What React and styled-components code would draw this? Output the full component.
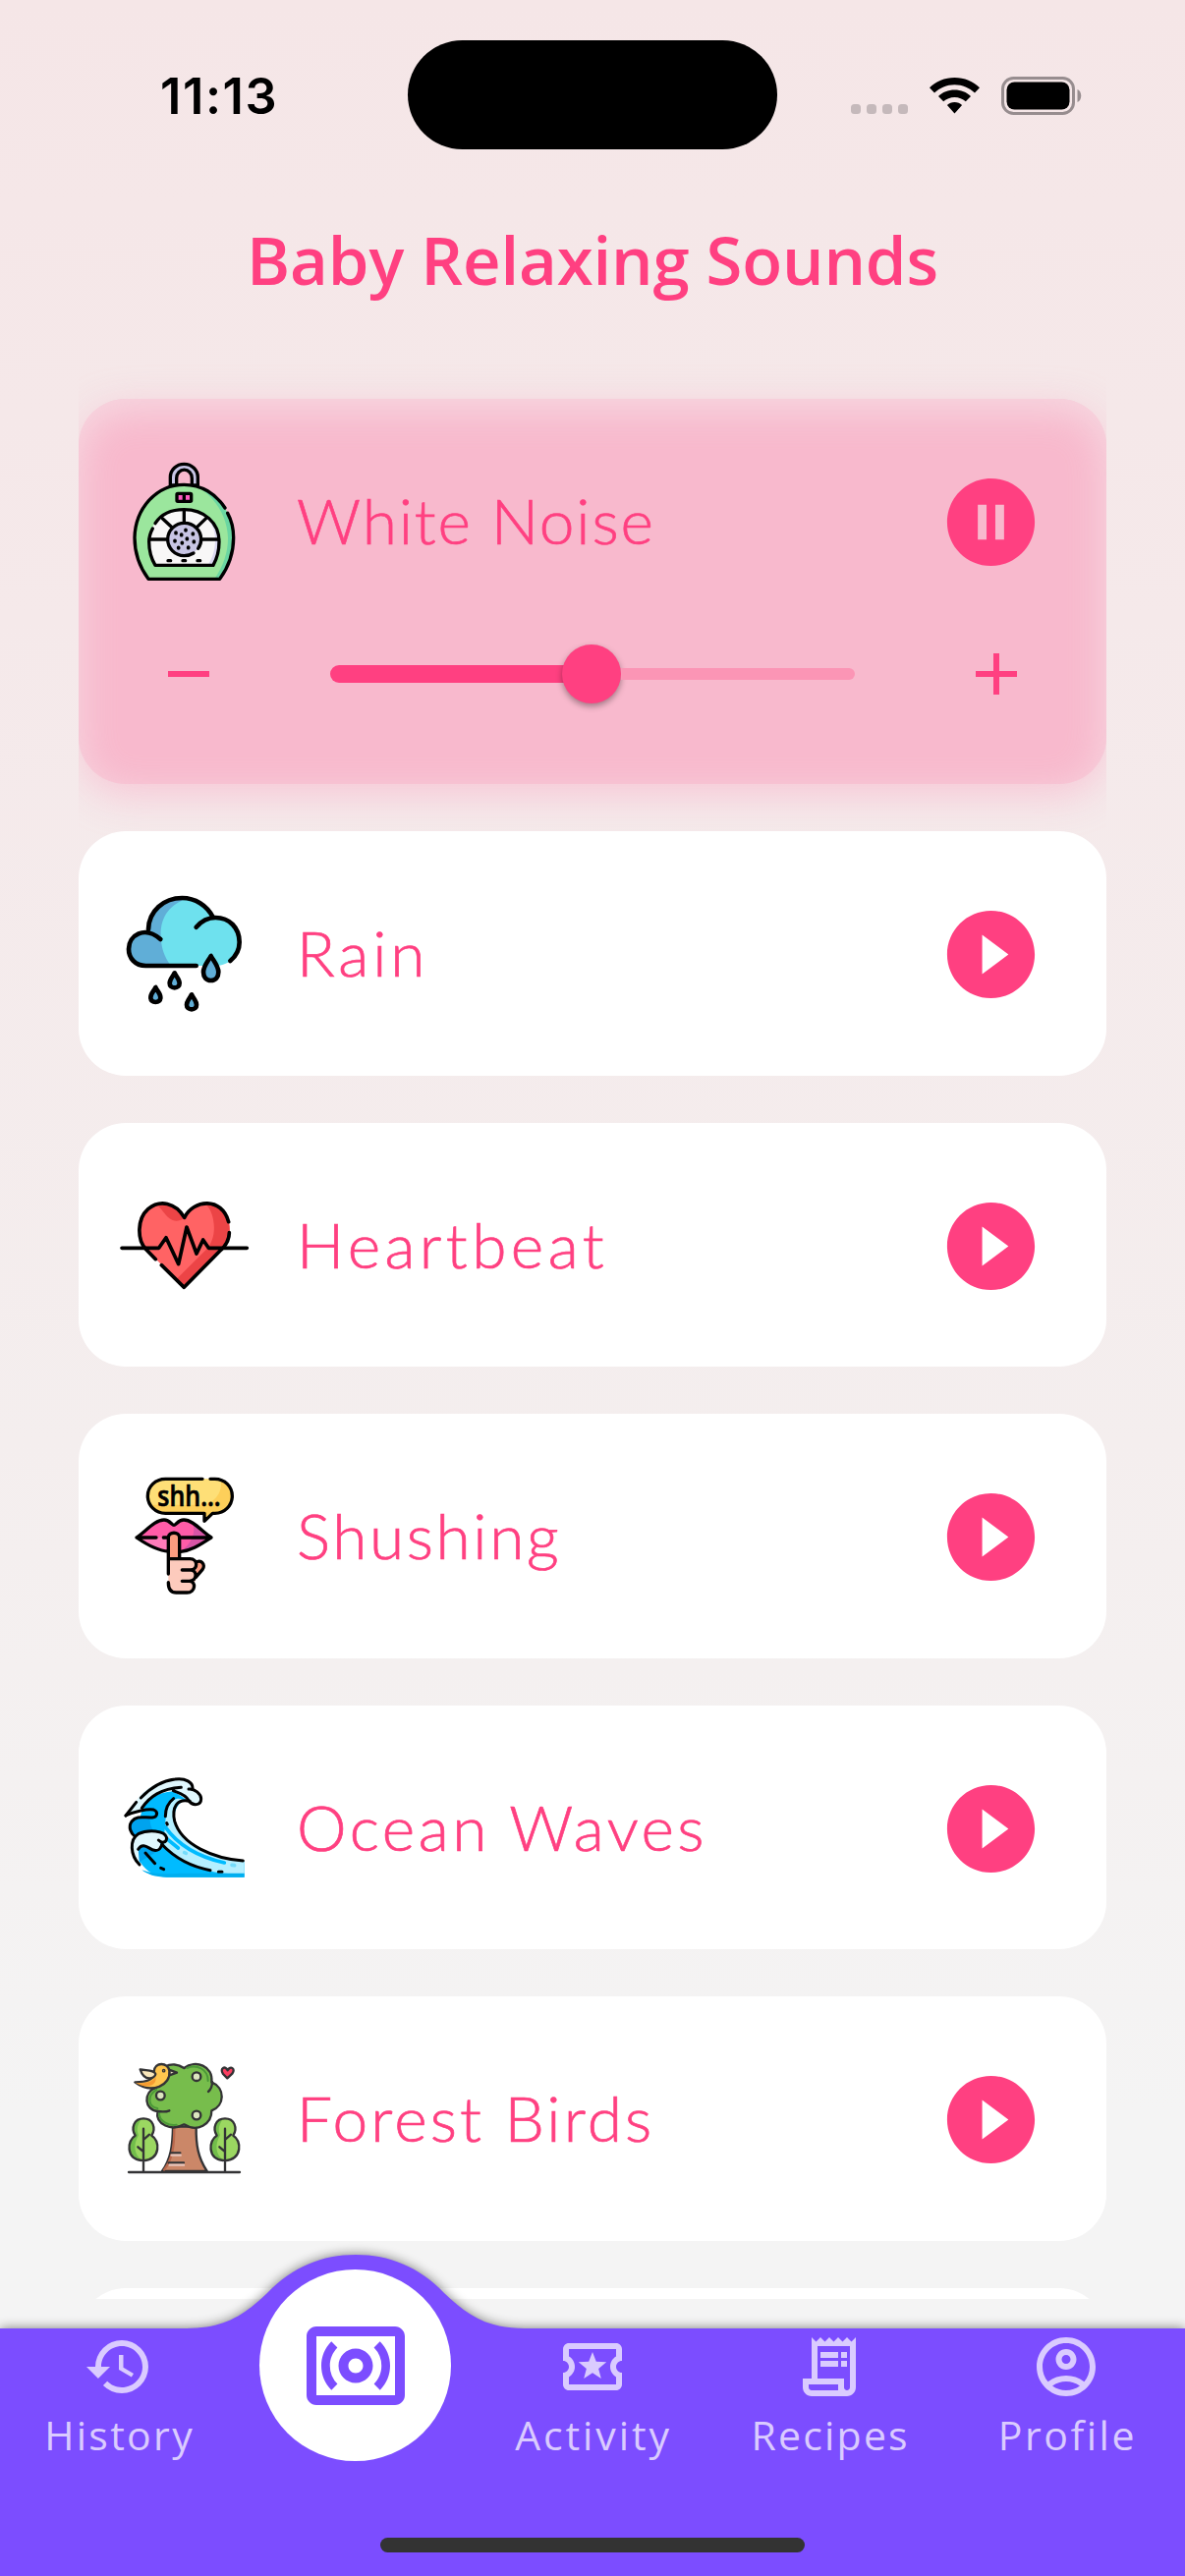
import React from "react";
import styled, { createGlobalStyle } from "styled-components";
import {
  MdAdd,
  MdHistory,
  MdOutlineAccountCircle,
  MdOutlineLocalActivity,
  MdOutlineReceiptLong,
  MdOutlineSurroundSound,
  MdPauseCircleFilled,
  MdPlayCircleFilled,
  MdRemove,
} from "react-icons/md";

const pink = "#ff4081";
const purple = "#7c4dff";

const GlobalStyle = createGlobalStyle`
  * { box-sizing: border-box; }
  body { margin: 0; background: #f4f4f4; }
  svg { display: block; flex-shrink: 0; }
`;

const Screen = styled.div`
  width: 1206px;
  height: 2622px;
  overflow: hidden;
  display: flex;
  flex-direction: column;
  background: linear-gradient(180deg, #f5e6e7 0%, #f5e9ea 24%, #f4eeee 56%, #f4f4f4 82%);
  font-family: "Open Sans", "Noto Sans", sans-serif;
`;

const StatusBar = styled.header`
  height: 193px;
  padding: 41px 105px 0 163px;
  display: flex;
  align-items: flex-start;
`;

const Clock = styled.time`
  width: 252px;
  height: 112px;
  line-height: 114px;
  font-family: Inter, "Liberation Sans", sans-serif;
  font-size: 50.5px;
  font-weight: 600;
  letter-spacing: 1.6px;
  color: #000;
`;

const Island = styled.div`
  width: 376px;
  height: 111px;
  border-radius: 56px;
  background: #000;
`;

const StatusIcons = styled.div`
  flex: 1;
  height: 112px;
  display: flex;
  align-items: center;
  justify-content: flex-end;
  gap: 22px;
`;

const SignalDots = styled.div`
  display: flex;
  gap: 6px;
  padding-top: 28px;
`;

const Dot = styled.i`
  width: 10px;
  height: 10px;
  border-radius: 3.5px;
  background: #c5b9bb;
`;

const Title = styled.h1`
  margin: 0;
  height: 173px;
  line-height: 142px;
  text-align: center;
  font-size: 67px;
  font-weight: 600;
  letter-spacing: -0.15px;
  color: ${pink};
`;

const List = styled.main`
  height: 1974px;
  margin: 0 80px;
  padding-top: 40px;
  overflow: hidden;
  display: flex;
  flex-direction: column;
  gap: 48px;
`;

const Card = styled.section`
  flex: none;
  height: ${(p) => (p.$active ? 392 : 248.5)}px;
  border-radius: 48px;
  background: ${(p) => (p.$active ? "#f8b9cd" : "#fff")};
  box-shadow: ${(p) =>
    p.$active
      ? "inset 0 11px 42px rgba(245,228,232,.75), 0 11px 42px rgba(248,185,205,.72)"
      : "none"};
`;

const CardHead = styled.div`
  height: 248.5px;
  padding: 0 64px 0 30px;
  display: flex;
  align-items: center;
`;

const Label = styled.h2`
  flex: 1;
  margin: 0 0 0 32px;
  font-family: Lato, "Open Sans", sans-serif;
  font-size: 64px;
  line-height: 90px;
  font-weight: 300;
  letter-spacing: ${(p) => p.$track}px;
  -webkit-text-stroke: 0.7px ${pink};
  color: ${pink};
`;

const PlayButton = styled.button`
  width: 108px;
  height: 110px;
  padding: 3px 0 0 0.5px;
  border: 0;
  background: none;
  color: ${pink};
  font-size: 107px;
`;

const VolumeRow = styled.div`
  height: 63px;
  padding: 0 76px;
  display: flex;
  align-items: center;
  justify-content: space-between;
  color: ${pink};
  font-size: 72px;
`;

const Slider = styled.div`
  width: 534px;
  height: 60px;
  margin-left: 25px;
  margin-right: 25px;
  display: flex;
  align-items: center;
`;

const Played = styled.div`
  flex: 1;
  height: 18px;
  margin-right: -2px;
  border-radius: 9px 0 0 9px;
  background: ${pink};
`;

const Remaining = styled.div`
  flex: 1;
  height: 12px;
  border-radius: 0 6px 6px 0;
  background: #fb95b5;
`;

const Thumb = styled.div`
  width: 60px;
  height: 60px;
  border-radius: 50%;
  background: ${pink};
  box-shadow: 0 3px 6px rgba(0, 0, 0, 0.35);
`;

const Nav = styled.nav`
  position: relative;
  height: 282px;
  padding-top: 30px;
`;

const NavShape = styled.svg`
  position: absolute;
  left: 0;
  bottom: 0;
`;

const Tabs = styled.div`
  position: relative;
  display: grid;
  grid-template-columns: repeat(5, 1fr);
  height: 213px;
`;

const Tab = styled.a`
  display: flex;
  flex-direction: column;
  align-items: center;
  padding-top: 3px;
  color: #dacbff;
  font-size: 72px;
`;

const TabLabel = styled.span`
  margin-top: 5px;
  padding-left: 2px;
  font-size: 41px;
  line-height: 56px;
  font-weight: 400;
  letter-spacing: ${(p) => p.$track}px;
`;

const ActiveTab = styled.a`
  width: 195px;
  height: 195px;
  margin-top: -60px;
  justify-self: center;
  display: grid;
  place-items: center;
  border-radius: 50%;
  background: #fff;
  color: ${purple};
  font-size: 120px;
`;

const HomeIndicator = styled.div`
  position: relative;
  width: 432px;
  height: 15px;
  margin: 0 auto;
  border-radius: 8px;
  background: #333;
`;

const Picture = styled.svg.attrs({ width: 160, height: 160 })`
  overflow: visible;
  fill: none;
  stroke: ${(p) => p.$ink || "#000"};
  stroke-width: ${(p) => p.$weight || 10};
  stroke-linecap: round;
  stroke-linejoin: round;
`;

const NoisePicture = () => (
  <Picture viewBox="0 30 480 480">
    <path d="M190 162V137a42 40 0 0 1 84 0v25h-18v-22a23 25 0 0 0-47 0v22Z" fill="#c8c6e6" />
    <path d="M123 448C95 410 81 368 81 322C83 235 145 160 232 160S381 235 383 322C383 368 369 410 341 448Z" fill="#9be69d" stroke="none" />
    <path d="M285 174C345 198 381 255 383 322C383 368 369 410 341 448H325C352 408 366 368 366 322C364 262 333 208 285 174Z" fill="#6bd6a2" stroke="none" />
    <path d="M357 231C329 188 285 160 232 160C145 160 83 235 81 322C81 368 95 410 123 448H341C369 410 383 368 383 322C383 294 377 269 365 247" />
    <path d="M144 406C131 385 125 360 125 334C125 275 172 236 232 236S339 275 339 334C339 360 333 385 321 406Z" fill="#f8f7f7" stroke="none" />
    <path d="M292 254C323 270 339 299 339 334C339 360 333 385 321 406H305C321 380 327 355 327 327C327 298 316 274 292 254Z" fill="#dbd8f0" stroke="none" />
    <path d="M136 294C127 311 125 322 125 334C125 360 131 385 144 406H321C333 385 339 360 339 334C339 275 292 236 232 236C195 236 162 250 144 278" />
    <path d="M232 238v38M166 263l29 27M299 263l-28 27M127 327h54M338 327h-54" />
    <circle cx="232" cy="327" r="50" fill="#c8c5e4" stroke="none" />
    <path d="M275 355C283 344 284 334 284 327a51 50 0 1 0-52 50c12 0 21-3 29-8" />
    <rect x="210" y="187" width="44" height="24" rx="3" fill="#ff5bc3" />
    <path d="M232 188v22M183 392h8M228 392h8M273 392h8" />
    <path d="M207 306v2M237 298v2M259 309v2M224 312v2M241 324v2M204 331v2M226 337v2M262 333v2M215 352v2M245 351v2" strokeWidth="11" />
  </Picture>
);

const RainPicture = () => (
  <Picture viewBox="0 0 480 480" $weight={14}>
    <path d="M115 279C82 279 63 255 63 228C63 197 86 175 123 175C124 112 170 72 226 72C266 72 301 94 320 130C370 130 401 163 401 207C401 241 378 279 325 279Z" fill="#6ee1ee" stroke="none" />
    <path d="M115 279C82 279 63 255 63 228C63 197 86 175 123 175C124 112 170 72 235 76C180 98 161 137 161 184C161 222 171 252 192 279Z" fill="#60aed7" stroke="none" />
    <path d="M269 279H115C82 279 63 255 63 228C63 186 111 155 160 198" />
    <path d="M123 168C124 112 170 72 226 72C266 72 301 94 320 130M269 161C290 137 308 132 328 132C370 132 401 163 401 207C401 228 390 250 373 264" />
    <path d="M314 249C306 264 291 280 291 298C291 314 300 324 314 324S337 314 337 298C337 280 322 264 314 249Z" fill="#60aed7" />
    {[
      [203, 301],
      [145, 345],
      [255, 367],
    ].map(([x, y]) => (
      <path key={x} d={`M${x} ${y}c-5 11-15 19-15 31 0 9 6 14 15 14s15-5 15-14c0-12-10-20-15-31Z`} fill="#60aed7" />
    ))}
  </Picture>
);

const HeartPicture = () => (
  <Picture viewBox="0 -10 480 480" $weight={11}>
    <path d="M232 360L126 254C84 215 84 154 112 125C151 86 205 99 233 149C257 98 315 89 350 124C380 154 380 213 340 250Z" fill="#ff6364" stroke="none" />
    <path d="M292 104C330 101 372 134 371 185C370 218 355 237 340 250L232 360L208 336L300 244C327 216 330 166 313 127C308 115 300 108 292 104ZM148 108C170 98 210 110 233 149C214 161 199 158 188 150C172 138 164 119 148 108Z" fill="#ec4446" stroke="none" />
    <path d="M145 274L116 244C88 216 88 151 122 121C158 91 206 101 233 147C261 91 347 83 368 160M370 193C370 218 356 236 340 250L232 360L163 292" />
    <path d="M42 240H155L177 208L215 289L240 176L270 257L290 215L307 240H424" />
  </Picture>
);

const BubbleText = styled.text`
  fill: #000;
  stroke: #000;
  stroke-width: 2;
  font-family: "Open Sans", sans-serif;
  font-size: 88px;
  font-weight: 600;
`;

const ShushPicture = () => (
  <Picture viewBox="0 10 480 480">
    <path d="M175 77H326C356 77 379 100 379 129S356 182 326 182H319L294 206V182H175C145 182 121 158 121 129S145 77 175 77Z" fill="#fedf77" stroke="none" />
    <path d="M344 79C367 86 379 105 379 129C379 158 356 182 326 182H319L294 206V182H175C155 182 138 171 129 156H295C327 147 351 115 344 79Z" fill="#fdcf5a" stroke="none" />
    <path d="M288 77H175C145 77 121 100 121 129S145 182 175 182H294V206L319 182H326C356 182 379 158 379 129S356 77 326 77H312" />
    <BubbleText x="151" y="159" textLength="193" lengthAdjust="spacingAndGlyphs">shh...</BubbleText>
    <path d="M87 256C116 236 143 202 171 202C188 202 195 218 201 218S214 202 231 202C259 202 285 236 315 256C283 276 252 301 201 298C150 301 116 276 87 256Z" fill="#ff5ca8" stroke="none" />
    <path d="M87 256H201V299C150 301 116 276 87 256Z" fill="#ff7bba" stroke="none" />
    <path d="M259 213C279 225 294 243 315 256C290 274 257 296 222 298C248 281 270 245 259 213Z" fill="#d755a6" stroke="none" />
    <path d="M87 256C116 236 143 202 171 202C188 202 195 218 201 218S214 202 231 202C259 202 285 236 315 256C283 276 256 296 222 299M87 256C116 276 149 297 184 298M87 256H147M169 256H184M218 256H315" />
    <path d="M184 390V256C184 237 218 237 218 256V321H250C262 321 269 329 268 337C275 322 292 333 292 347L268 380C270 389 262 392 262 398C266 423 248 424 241 424H205C190 424 184 412 184 400Z" fill="#fdcbbd" stroke="none" />
    <path d="M184 321V256C184 237 218 237 218 256V321ZM269 334C281 323 292 333 292 347L269 373Z" fill="#fb9c80" stroke="none" />
    <path d="M184 367V256C184 237 218 237 218 256V321M184 321H250C275 321 275 354 252 355H226M252 355C273 355 273 389 248 389H226M248 389C270 389 267 424 241 424H208C193 424 184 413 184 393M268 333C282 320 300 339 288 354L268 377" />
  </Picture>
);

const WavePicture = () => (
  <Picture viewBox="0 0 480 480" $weight={9}>
    <path d="M105 183C127 150 152 134 197 130L253 160C219 147 197 190 204 224C219 291 335 337 416 342V392H180C144 392 117 374 100 349C80 336 68 301 83 270C60 253 62 206 98 208Z" fill="#00bbff" stroke="none" />
    <path d="M128 204C126 237 136 256 160 266L181 295L98 344C68 304 68 285 83 270C53 240 68 203 105 208Z" fill="#00a3ee" stroke="none" />
    <path d="M240 162C206 155 198 192 206 226C226 293 334 341 416 342V382C282 386 190 337 169 287L164 256C180 273 168 216 184 177C199 148 220 146 240 162Z" fill="#b5efff" stroke="none" />
    <path d="M174 238C220 304 293 334 355 348M171 268L214 303" stroke="#00bbff" strokeWidth="11" />
    <path d="M233 317L238 319M378 355L386 356" stroke="#74dcfb" strokeWidth="11" />
    <path d="M103 183C125 150 156 130 200 128L247 161C261 176 284 169 284 153C284 137 269 127 258 119C247 94 220 88 193 94C148 99 93 133 84 168L54 204Z" fill="#dff7fd" stroke="none" />
    <path d="M54 204L86 163M100 150C123 126 154 99 204 93C238 88 258 104 258 119M246 123C264 121 284 138 284 153C284 172 260 177 247 159C235 136 208 133 199 128M103 181C128 145 161 122 223 118" />
    <path d="M54 204C82 191 119 183 139 186C155 193 150 209 135 210C109 211 87 203 72 222C60 239 70 259 83 269" />
    <path d="M96 354C67 325 65 277 92 260C121 246 174 248 179 272C178 288 164 289 154 279C166 293 159 313 141 310C126 308 107 282 92 307Z" fill="#e0f7fd" stroke="none" />
    <path d="M96 354C67 325 65 277 92 260C121 246 174 248 179 272C178 288 164 289 154 279M92 307C107 282 126 308 141 310C161 313 159 298 166 293" />
    <path d="M249 160C210 151 194 179 203 221C224 294 323 335 412 342M164 292C207 337 256 361 312 371M337 376H348M200 152C182 166 175 183 175 206M179 227L181 231M114 318L143 350M161 364L170 368" />
    <path d="M103 370C143 385 179 383 220 380H416V392H177C144 392 120 384 103 370Z" fill="#00aeef" stroke="none" />
  </Picture>
);

const sideTree =
  "M0 391V261M0 295l18-16M0 331l-17-14M-6 358C-54 354-51 297-25 282C-39 259-29 230 0 230S39 259 25 282C51 297 54 354 0 359";

const ForestPicture = () => (
  <Picture viewBox="0 -11 480 480" $ink="#333335" $weight={7}>
    {[108, 357].map((x) => (
      <g key={x} transform={`translate(${x} 0)`}>
        <path d="M0 359C-54 359-51 297-25 282C-39 259-29 230 0 230S39 259 25 282C51 297 54 359 0 359Z" fill="#9bd761" stroke="none" />
        <path d="M-5 357C-54 354-51 297-25 282C-39 259-29 232-7 231C-22 256-20 266-15 281C-32 310-29 341-5 357Z" fill="#72bd4b" stroke="none" />
        <path d={sideTree} />
      </g>
    ))}
    <path d="M198 255C197 315 191 354 165 391H302C275 350 268 312 269 255Z" fill="#cb8768" />
    <path d="M202 260C202 315 196 354 171 387" stroke="#b9684d" />
    <path d="M192 335H220M185 365H231" />
    <path d="M194 342H221M188 372H231" stroke="#e8c5bb" />
    <path d="M148 134C104 151 112 204 151 208C144 249 194 270 232 248C272 274 317 247 316 206C356 192 359 136 316 119C322 70 267 49 232 76C196 51 142 70 148 134Z" fill="#77bd4c" />
    <path d="M148 142C118 161 122 194 151 199M156 211C154 241 190 254 209 249M241 76C270 63 306 80 305 115" stroke="#4b9837" strokeWidth="6" />
    <path d="M318 118C318 132 313 142 306 148M151 208C166 210 178 210 187 206" />
    <g fill="#dce5bf">
      <circle cx="270" cy="102" r="13" />
      <circle cx="160" cy="160" r="13" />
      <circle cx="270" cy="220" r="13" />
    </g>
    <path d="M186 81L210 90L187 98Z" fill="#e8dfbd" />
    <path d="M82 119C118 119 139 113 140 88C141 55 185 58 187 85C193 127 134 158 82 119Z" fill="#ffc64e" />
    <path d="M84 120C111 125 135 119 145 103C152 129 115 142 84 120Z" fill="#f59c32" stroke="none" />
    <path d="M98 80C118 84 141 81 145 94C144 108 111 120 98 80Z" fill="#f8e6bb" />
    <circle cx="170" cy="84" r="2" />
    <path d="M364 107L351 94C339 76 359 67 365 83C373 67 391 78 379 93Z" fill="#fa3f61" />
    <path d="M63 394H402" />
  </Picture>
);

const sounds = [
  { name: "White Noise", Art: NoisePicture, active: true, track: 1.8 },
  { name: "Rain", Art: RainPicture, track: 3.9 },
  { name: "Heartbeat", Art: HeartPicture, track: 4.4 },
  { name: "Shushing", Art: ShushPicture, track: 2.6 },
  { name: "Ocean Waves", Art: WavePicture, track: 3.5 },
  { name: "Forest Birds", Art: ForestPicture, track: 3.1 },
];

function SoundCard({ name, Art, active, track }) {
  return (
    <Card $active={active}>
      <CardHead>
        <Art />
        <Label $track={track}>{name}</Label>
        <PlayButton aria-label={active ? "Pause" : "Play"}>
          {active ? <MdPauseCircleFilled /> : <MdPlayCircleFilled />}
        </PlayButton>
      </CardHead>
      {active && (
        <VolumeRow>
          <MdRemove />
          <Slider>
            <Played />
            <Thumb />
            <Remaining />
          </Slider>
          <MdAdd />
        </VolumeRow>
      )}
    </Card>
  );
}

export default function App() {
  return (
    <>
      <GlobalStyle />
      <Screen>
        <StatusBar>
          <Clock>11:13</Clock>
          <Island />
          <StatusIcons>
            <SignalDots>
              <Dot />
              <Dot />
              <Dot />
              <Dot />
            </SignalDots>
            <svg width="51" height="37" viewBox="0 0 51 37">
              <path d="M25.5 0C35.5 0 44.600 4 51 10.300L46 15.600C40.500 10.400 33.500 7.300 25.500 7.300S10.500 10.400 5 15.600L0 10.300C6.400 4 15.500 0 25.500 0Z" />
              <path d="M25.500 12.600C32 12.600 37.700 15 42 19L36.800 24.300C33.700 21.500 29.800 19.900 25.500 19.900S17.300 21.500 14.200 24.300L9 19C13.300 15 19 12.600 25.500 12.600Z" />
              <path d="M25.500 25.100C28.500 25.100 31.100 26.100 33.100 28L25.500 36.500L17.900 28C19.900 26.100 22.500 25.100 25.500 25.100Z" />
            </svg>
            <svg width="82" height="39" viewBox="0 0 82 39">
              <rect x="1.500" y="1.500" width="72" height="36" rx="11" fill="none" stroke="#978d8f" strokeWidth="3" />
              <rect x="5.500" y="5.500" width="64" height="28" rx="8" />
              <path d="M77.500 13C82.500 15 82.500 24 77.500 26Z" fill="#978d8f" />
            </svg>
          </StatusIcons>
        </StatusBar>
        <Title>Baby Relaxing Sounds</Title>
        <List>
          {sounds.map((s) => (
            <SoundCard key={s.name} {...s} />
          ))}
          <Card />
        </List>
        <Nav>
          <NavShape width="1206" height="360" viewBox="0 2262 1206 360">
            <defs>
              <filter id="lift" x="-5%" y="-15%" width="110%" height="130%">
                <feGaussianBlur stdDeviation="6" />
              </filter>
            </defs>
            <path
              d="M0 2370H190C228 2370 248 2357 272 2334C298 2307 328 2295 362 2295S426 2307 452 2334C476 2357 496 2370 534 2370H1206V2622H0Z"
              fill="#000"
              opacity=".5"
              filter="url(#lift)"
            />
            <path
              d="M0 2370H190C228 2370 248 2357 272 2334C298 2307 328 2295 362 2295S426 2307 452 2334C476 2357 496 2370 534 2370H1206V2622H0Z"
              fill={purple}
            />
          </NavShape>
          <Tabs>
            <Tab>
              <MdHistory />
              <TabLabel $track={2.3}>History</TabLabel>
            </Tab>
            <ActiveTab aria-label="Sounds">
              <MdOutlineSurroundSound />
            </ActiveTab>
            <Tab>
              <MdOutlineLocalActivity />
              <TabLabel $track={2.9}>Activity</TabLabel>
            </Tab>
            <Tab>
              <MdOutlineReceiptLong />
              <TabLabel $track={2.2}>Recipes</TabLabel>
            </Tab>
            <Tab>
              <MdOutlineAccountCircle />
              <TabLabel $track={2.5}>Profile</TabLabel>
            </Tab>
          </Tabs>
          <HomeIndicator />
        </Nav>
      </Screen>
    </>
  );
}
